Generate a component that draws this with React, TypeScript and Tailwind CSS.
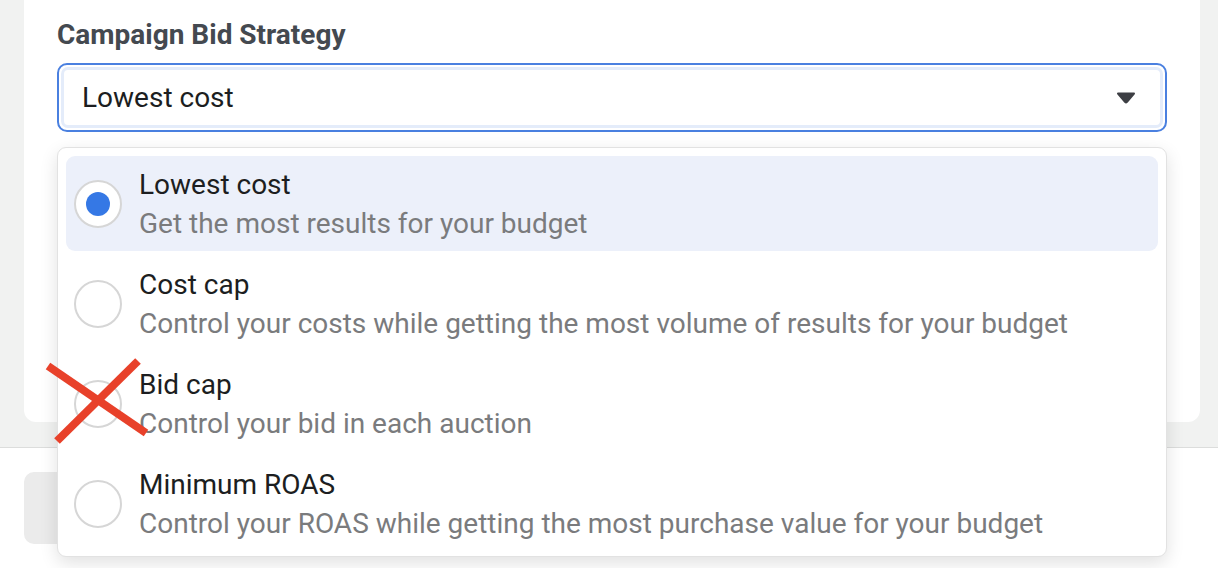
import React from 'react';

interface BidOption {
  title: string;
  description: string;
  selected?: boolean;
}

const options: BidOption[] = [
  { title: 'Lowest cost', description: 'Get the most results for your budget', selected: true },
  { title: 'Cost cap', description: 'Control your costs while getting the most volume of results for your budget' },
  { title: 'Bid cap', description: 'Control your bid in each auction' },
  { title: 'Minimum ROAS', description: 'Control your ROAS while getting the most purchase value for your budget' },
];

const Radio: React.FC<{ checked?: boolean }> = ({ checked }) => (
  <div className="w-12 h-12 shrink-0 rounded-full border-2 border-[#d6d6d6] bg-white flex items-center justify-center">
    {checked && <div className="w-6 h-6 rounded-full bg-[#3578e5]" />}
  </div>
);

const App: React.FC = () => {
  return (
    <div
      className="relative w-[1218px] h-[568px] overflow-hidden bg-[#f1f2f1]"
      style={{ fontFamily: 'Roboto, "Liberation Sans", sans-serif' }}
    >
      {/* page area behind the menu */}
      <div className="h-[448px] border-b border-[#dcdddc] pl-6 pr-[18px]">
        <div className="h-[422px] bg-white rounded-b-xl pl-[33px] pr-[33px] pt-[18px]">
          <h2 className="text-[28px] leading-[34px] font-bold text-[#444950]">Campaign Bid Strategy</h2>
          <div className="mt-[11px] h-[69px] w-[1110px] rounded-[10px] border-2 border-[#4a80e0] p-[2px]">
            <div className="h-full rounded-[7px] bg-white ring-[3px] ring-inset ring-[#e4ecfa] flex items-center justify-between pl-[21px] pr-[27px]">
              <span className="text-[28px] text-[#1c1e21]">Lowest cost</span>
              <svg width="20" height="12" viewBox="0 0 20 12">
                <path d="M2 1.5 H18 L10.8 10 Q10 11 9.2 10 Z" fill="#3d3f44" stroke="#3d3f44" strokeWidth="2" strokeLinejoin="round" />
              </svg>
            </div>
          </div>
        </div>
      </div>
      <div className="bg-white h-[120px] px-6 pt-6">
        <div className="w-[240px] h-[72px] rounded-[10px] bg-[#ebebeb]" />
      </div>

      {/* open menu */}
      <div className="absolute left-[57px] top-[147px] w-[1110px] h-[410px] bg-white rounded-[9px] border border-[#e2e2e2] shadow-[0_6px_18px_rgba(0,0,0,0.12)] p-2 flex flex-col gap-[5px]">
        {options.map((opt) => (
          <div
            key={opt.title}
            className={`h-[95px] shrink-0 rounded-[9px] flex items-center pl-2 gap-[17px] ${opt.selected ? 'bg-[#ecf0fa]' : ''}`}
          >
            <Radio checked={opt.selected} />
            <div className="flex flex-col">
              <span className="text-[28px] leading-[39px] text-[#1c1e21]">{opt.title}</span>
              <span className="text-[28px] leading-[39px] text-[#7a7b7d]">{opt.description}</span>
            </div>
          </div>
        ))}
      </div>

      {/* red cross annotation */}
      <svg className="absolute left-0 top-0 pointer-events-none" width="1218" height="568">
        <line x1="48" y1="366" x2="146" y2="433" stroke="#e8412a" strokeWidth="8" />
        <line x1="138" y1="361" x2="57" y2="441" stroke="#e8412a" strokeWidth="8" />
      </svg>
    </div>
  );
};

export default App;
